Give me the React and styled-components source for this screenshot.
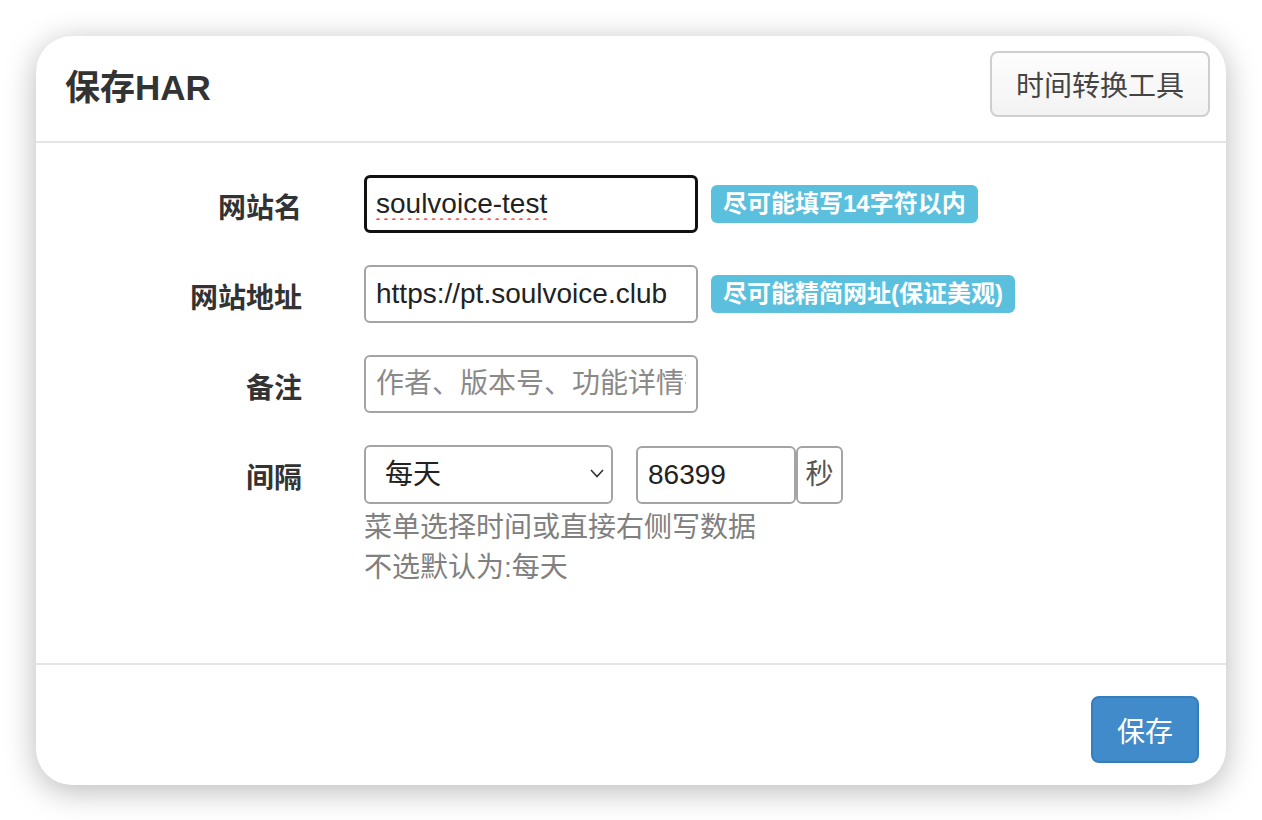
import React from "react";
import styled, { createGlobalStyle } from "styled-components";

const GlobalStyle = createGlobalStyle`
  html, body {
    margin: 0;
    padding: 0;
    background: #fff;
  }
  body {
    font-family: "Liberation Sans", "Noto Sans CJK SC", sans-serif;
    color: #333;
  }
  * {
    box-sizing: border-box;
  }
`;

const Page = styled.div`
  padding: 36px;
`;

const Modal = styled.div`
  width: 1190px;
  background: #fff;
  border-radius: 36px;
  box-shadow: 0 6px 32px rgba(0, 0, 0, 0.28);
  overflow: hidden;
`;

const Header = styled.div`
  display: flex;
  align-items: center;
  justify-content: space-between;
  padding: 15px 16px 24px 29px;
  border-bottom: 2px solid #e5e5e5;
`;

const Title = styled.h4`
  margin: 0;
  font-size: 35px;
  font-weight: 600;
  color: #333;
`;

const DefaultButton = styled.button`
  height: 66px;
  padding: 0 24px;
  font-family: inherit;
  font-size: 28px;
  color: #444;
  background: linear-gradient(#fdfdfd, #f3f3f3);
  border: 2px solid #cfcfcf;
  border-radius: 8px;
`;

const Body = styled.div`
  padding: 32px 0 75px;
`;

const Row = styled.div`
  display: flex;
  align-items: flex-start;
  margin-bottom: ${(p) => (p.last ? 0 : 32)}px;
`;

const Label = styled.label`
  width: 266px;
  margin-right: 62px;
  height: 58px;
  line-height: 58px;
  padding-top: 5px;
  text-align: right;
  font-size: 28px;
  font-weight: 700;
  color: #333;
`;

const Controls = styled.div`
  display: flex;
  flex-direction: column;
`;

const Line = styled.div`
  display: flex;
  align-items: center;
`;

const TextInput = styled.input`
  width: ${(p) => p.w || 334}px;
  height: 58px;
  padding: 0 ${(p) => (p.focused ? 9 : 10)}px;
  font-family: inherit;
  font-size: 28px;
  color: #222;
  background: #fff;
  border: ${(p) => (p.focused ? "3px solid #111" : "2px solid #a4a4a4")};
  border-radius: 6px;
  outline: none;
  text-decoration-line: ${(p) => (p.misspelt ? "underline" : "none")};
  text-decoration-style: dotted;
  text-decoration-color: #ff5f57;
  text-decoration-thickness: 4px;
  text-underline-offset: 5px;

  &::placeholder {
    color: #8a8a8a;
  }
`;

const Badge = styled.span`
  margin-left: 13px;
  height: 38px;
  line-height: 38px;
  padding: 0 12px;
  background: #5bc0de;
  color: #fff;
  font-size: 24px;
  font-weight: 700;
  border-radius: 6px;
`;

const SelectWrap = styled.div`
  position: relative;
  width: 249px;
  height: 59px;
`;

const Select = styled.select`
  width: 100%;
  height: 100%;
  padding: 0 40px 0 19px;
  appearance: none;
  font-family: inherit;
  font-size: 28px;
  color: #222;
  background: #fff;
  border: 2px solid #a4a4a4;
  border-radius: 6px;
  outline: none;
`;

const Chevron = styled.svg`
  position: absolute;
  right: 9px;
  top: 24px;
  pointer-events: none;
`;

const NumberGroup = styled.div`
  display: flex;
  margin-left: 23px;
`;

const Addon = styled.span`
  width: 47px;
  height: 58px;
  line-height: 54px;
  text-align: center;
  font-size: 28px;
  color: #555;
  background: #fff;
  border: 2px solid #a4a4a4;
  border-radius: 6px;
`;

const Help = styled.div`
  margin-top: 4px;
  font-size: 28px;
  line-height: 40px;
  color: #808080;
`;

const Footer = styled.div`
  display: flex;
  justify-content: flex-end;
  padding: 31px 27px 22px;
  border-top: 2px solid #e5e5e5;
`;

const PrimaryButton = styled.button`
  height: 67px;
  padding: 0 24px;
  font-family: inherit;
  font-size: 28px;
  color: #fff;
  background: #428bca;
  border: 2px solid #357ebd;
  border-radius: 8px;
`;

export default function App() {
  return (
    <>
      <GlobalStyle />
      <Page>
        <Modal>
          <Header>
            <Title>保存HAR</Title>
            <DefaultButton>时间转换工具</DefaultButton>
          </Header>
          <Body>
            <Row>
              <Label>网站名</Label>
              <Line>
                <TextInput focused misspelt defaultValue="soulvoice-test" />
                <Badge>尽可能填写14字符以内</Badge>
              </Line>
            </Row>
            <Row>
              <Label>网站地址</Label>
              <Line>
                <TextInput defaultValue="https://pt.soulvoice.club" />
                <Badge>尽可能精简网址(保证美观)</Badge>
              </Line>
            </Row>
            <Row>
              <Label>备注</Label>
              <Line>
                <TextInput placeholder="作者、版本号、功能详情等" />
              </Line>
            </Row>
            <Row last>
              <Label>间隔</Label>
              <Controls>
                <Line>
                  <SelectWrap>
                    <Select defaultValue="day">
                      <option value="day">每天</option>
                    </Select>
                    <Chevron width="14" height="9" viewBox="0 0 14 9">
                      <polyline
                        points="1,1 7,7.5 13,1"
                        fill="none"
                        stroke="#333"
                        strokeWidth="1.6"
                      />
                    </Chevron>
                  </SelectWrap>
                  <NumberGroup>
                    <TextInput w={160} defaultValue="86399" />
                    <Addon>秒</Addon>
                  </NumberGroup>
                </Line>
                <Help>
                  菜单选择时间或直接右侧写数据
                  <br />
                  不选默认为:每天
                </Help>
              </Controls>
            </Row>
          </Body>
          <Footer>
            <PrimaryButton>保存</PrimaryButton>
          </Footer>
        </Modal>
      </Page>
    </>
  );
}
